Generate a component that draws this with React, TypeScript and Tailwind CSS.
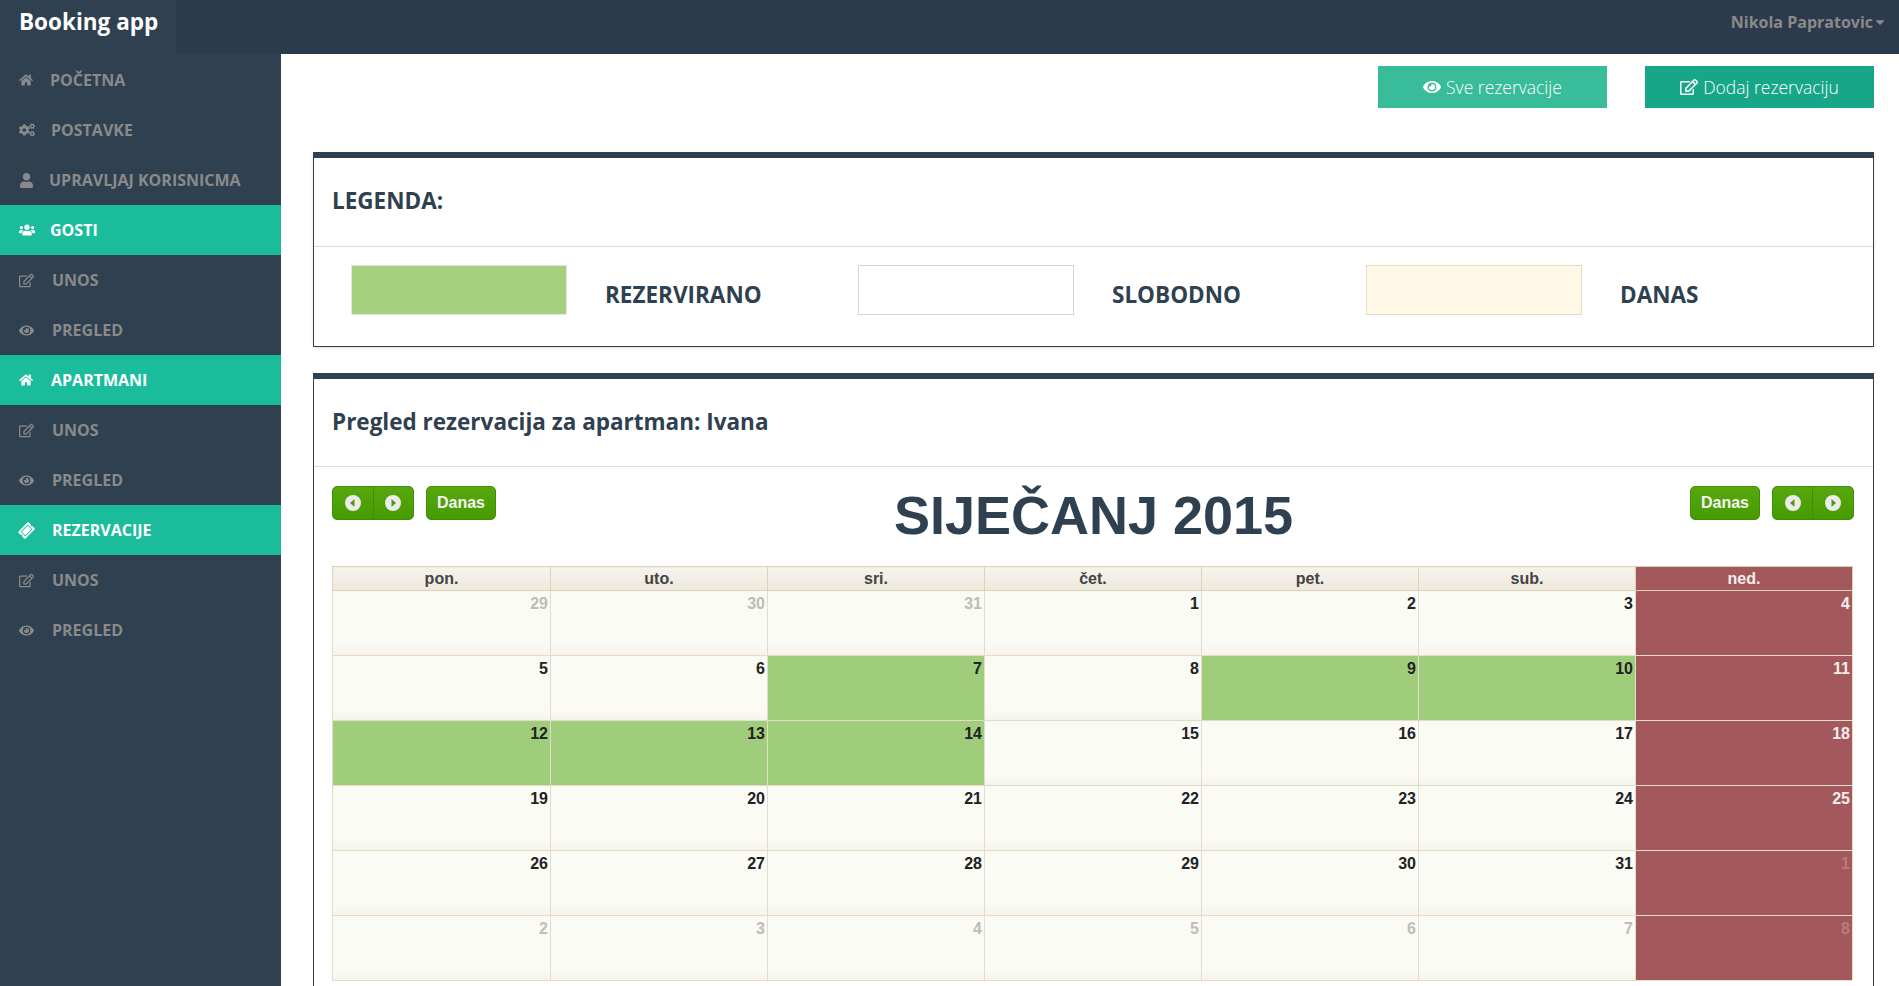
import { FaCaretDown, FaCogs, FaEye, FaHome, FaRegEdit, FaTicketAlt, FaUser, FaUsers } from "react-icons/fa";

const menu = [
  { label: "POČETNA", icon: FaHome, iconSize: "text-[14px]", gap: "gap-[17px]" },
  { label: "POSTAVKE", icon: FaCogs, iconSize: "text-[16px]", gap: "gap-[16px]" },
  { label: "UPRAVLJAJ KORISNICMA", icon: FaUser, iconSize: "text-[15px]", gap: "gap-[15px]" },
  { label: "GOSTI", icon: FaUsers, iconSize: "text-[16px]", gap: "gap-[15px]", active: true },
  { label: "UNOS", icon: FaRegEdit, iconSize: "text-[15px]", gap: "gap-[18px]" },
  { label: "PREGLED", icon: FaEye, iconSize: "text-[15px]", gap: "gap-[18px]" },
  { label: "APARTMANI", icon: FaHome, iconSize: "text-[14px]", gap: "gap-[18px]", active: true },
  { label: "UNOS", icon: FaRegEdit, iconSize: "text-[15px]", gap: "gap-[18px]" },
  { label: "PREGLED", icon: FaEye, iconSize: "text-[15px]", gap: "gap-[18px]" },
  { label: "REZERVACIJE", icon: FaTicketAlt, iconSize: "text-[15px]", gap: "gap-[18px]", active: true, rotate: true },
  { label: "UNOS", icon: FaRegEdit, iconSize: "text-[15px]", gap: "gap-[18px]" },
  { label: "PREGLED", icon: FaEye, iconSize: "text-[15px]", gap: "gap-[18px]" },
];

const days = [
  { name: "pon.", width: "w-[218px]" },
  { name: "uto.", width: "w-[217px]" },
  { name: "sri.", width: "w-[217px]" },
  { name: "čet.", width: "w-[217px]" },
  { name: "pet.", width: "w-[217px]" },
  { name: "sub.", width: "w-[217px]" },
  { name: "ned.", width: "w-[217px]" },
];

const weeks = [
  [29, 30, 31, 1, 2, 3, 4],
  [5, 6, 7, 8, 9, 10, 11],
  [12, 13, 14, 15, 16, 17, 18],
  [19, 20, 21, 22, 23, 24, 25],
  [26, 27, 28, 29, 30, 31, 1],
  [2, 3, 4, 5, 6, 7, 8],
];

const booked = [9, 11, 12, 14, 15, 16];

function ArrowCircle({ left }: { left?: boolean }) {
  return (
    <svg viewBox="0 0 16 16" className="w-4 h-4">
      <circle cx="8" cy="8" r="8" fill="#ececec" />
      <polygon points={left ? "9.5,4 9.5,12 5,8" : "6.5,4 6.5,12 11,8"} fill="#4c9c0a" />
    </svg>
  );
}

function NavButtons() {
  return (
    <div className="flex h-[34px] w-[82px] rounded-[5px] border border-[#3f8f05] bg-gradient-to-b from-[#56a80e] to-[#469a00]">
      <span className="flex flex-1 items-center justify-center border-r border-[#3f8f05]">
        <ArrowCircle left />
      </span>
      <span className="flex flex-1 items-center justify-center">
        <ArrowCircle />
      </span>
    </div>
  );
}

function TodayButton() {
  return (
    <div className="flex h-[34px] w-[70px] items-center justify-center rounded-[5px] border border-[#3f8f05] bg-gradient-to-b from-[#56a80e] to-[#469a00] text-[16px] font-bold text-[#f4f4f4]">
      Danas
    </div>
  );
}

function LegendItem({ label, swatch, width }: { label: string; swatch: string; width: string }) {
  return (
    <div className={`flex shrink-0 ${width}`}>
      <div className={`h-[50px] w-[216px] border ${swatch}`}></div>
      <span className="ml-[38px] mt-[15px] text-[22.5px] leading-[30px] font-bold text-[#2f4050]">{label}</span>
    </div>
  );
}

export default function App() {
  return (
    <div className="flex h-[986px] flex-col overflow-hidden bg-white font-['Open_Sans',sans-serif]">
      <header className="flex h-[54px] shrink-0 items-center justify-between bg-[#2b3a4c]">
        <div className="h-full w-[176px] bg-[#2f4050] pl-[19px] text-[22.5px] leading-[44px] font-bold text-white">
          Booking app
        </div>
        <div className="flex items-center pr-[12px] pb-[10px] text-[16px] font-bold text-[#8a8a8a]">
          Nikola Papratovic
          <FaCaretDown className="text-[14px]" />
        </div>
      </header>

      <div className="flex min-h-0 flex-1">
        <aside className="w-[281px] shrink-0 bg-[#2f4050] pt-px">
          {menu.map((item, i) => {
            const Icon = item.icon;
            return (
              <div
                key={i}
                className={`flex h-[50px] items-center pl-[19px] text-[16px] font-bold ${item.gap} ${
                  item.active ? "bg-[#1abc9c] text-white" : "text-[#8a8a8a]"
                }`}
              >
                <Icon className={`shrink-0 ${item.iconSize} ${item.rotate ? "-rotate-45" : ""}`} />
                <span>{item.label}</span>
              </div>
            );
          })}
        </aside>

        <main className="min-w-0 flex-1 pl-[32px] pr-[25px] pt-[12px]">
          <div className="flex justify-end gap-[38px]">
            <button className="flex h-[42px] w-[229px] items-center justify-center gap-[5px] bg-[#39bc9a] text-[17.5px] font-light text-white">
              <FaEye className="text-[18px]" />
              Sve rezervacije
            </button>
            <button className="flex h-[42px] w-[229px] items-center justify-center gap-[5px] bg-[#18a689] text-[17.5px] font-light text-white">
              <FaRegEdit className="text-[18px]" />
              Dodaj rezervaciju
            </button>
          </div>

          <section className="mt-[44px] h-[195px] border-x border-b border-t-[6px] border-[#2f4050] shadow-sm">
            <div className="flex h-[89px] items-center border-b border-[#dddddd] px-[18px] pb-[2px] text-[22.5px] font-bold text-[#2f4050]">
              LEGENDA:
            </div>
            <div className="flex pl-[37px] pt-[18px]">
              <LegendItem label="REZERVIRANO" width="w-[507px]" swatch="border-[#e5e5e5] bg-[#a4d080]" />
              <LegendItem label="SLOBODNO" width="w-[508px]" swatch="border-[#d5d5d5] bg-white" />
              <LegendItem label="DANAS" width="w-[507px]" swatch="border-[#e3dcc0] bg-[#fff8e6]" />
            </div>
          </section>

          <section className="mt-[26px] h-[700px] border-x border-t-[6px] border-[#2f4050]">
            <div className="flex h-[88px] items-center border-b border-[#dddddd] px-[18px] pb-px text-[22.5px] font-bold text-[#2f4050]">
              Pregled rezervacija za apartman: Ivana
            </div>

            <div className="px-[18px] pt-[19px] font-['Liberation_Sans',sans-serif]">
              <div className="flex h-[80px] items-start justify-between">
                <div className="flex w-[300px] gap-[12px]">
                  <NavButtons />
                  <TodayButton />
                </div>
                <h2 className="text-[54px] leading-[58px] font-bold text-[#2f4050]">SIJEČANJ 2015</h2>
                <div className="flex w-[300px] justify-end gap-[12px] pr-[1px]">
                  <TodayButton />
                  <NavButtons />
                </div>
              </div>

              <table className="w-[1520px] table-fixed border-collapse">
                <thead>
                  <tr className="h-[24px]">
                    {days.map((d, i) => (
                      <th
                        key={d.name}
                        className={`border border-[#dcd2ba] p-0 text-[16px] leading-[22px] font-bold ${d.width} ${
                          i === 6
                            ? "bg-[#a3585b] text-[#f6eeee]"
                            : "bg-gradient-to-b from-[#f6f3ed] to-[#eee9dd] text-[#444444]"
                        }`}
                      >
                        {d.name}
                      </th>
                    ))}
                  </tr>
                </thead>
                <tbody>
                  {weeks.map((week, w) => (
                    <tr key={w} className="h-[65px]">
                      {week.map((n, i) => {
                        const outside = (w === 0 && n > 20) || (w >= 4 && n < 20);
                        const sunday = i === 6;
                        const green = !sunday && booked.includes(w * 7 + i);
                        let bg = "bg-gradient-to-b from-[#fbfbf6] from-80% to-[#f6f3ea] border-[#e4dcc8]";
                        if (sunday) bg = "bg-[#a3585b] border-[#e6dfcf]";
                        if (green) bg = "bg-[#a0cd7c] border-[#e4dcc8]";
                        let color = "text-[#222222]";
                        if (outside) color = sunday ? "text-[#b97c7f]" : "text-[#bdbdb8]";
                        else if (sunday) color = "text-[#f6eeee]";
                        return (
                          <td
                            key={i}
                            className={`border p-0 pr-[2px] pt-[2px] align-top text-right text-[16px] leading-[22px] font-bold ${bg} ${color}`}
                          >
                            {n}
                          </td>
                        );
                      })}
                    </tr>
                  ))}
                </tbody>
              </table>
            </div>
          </section>
        </main>
      </div>
    </div>
  );
}
